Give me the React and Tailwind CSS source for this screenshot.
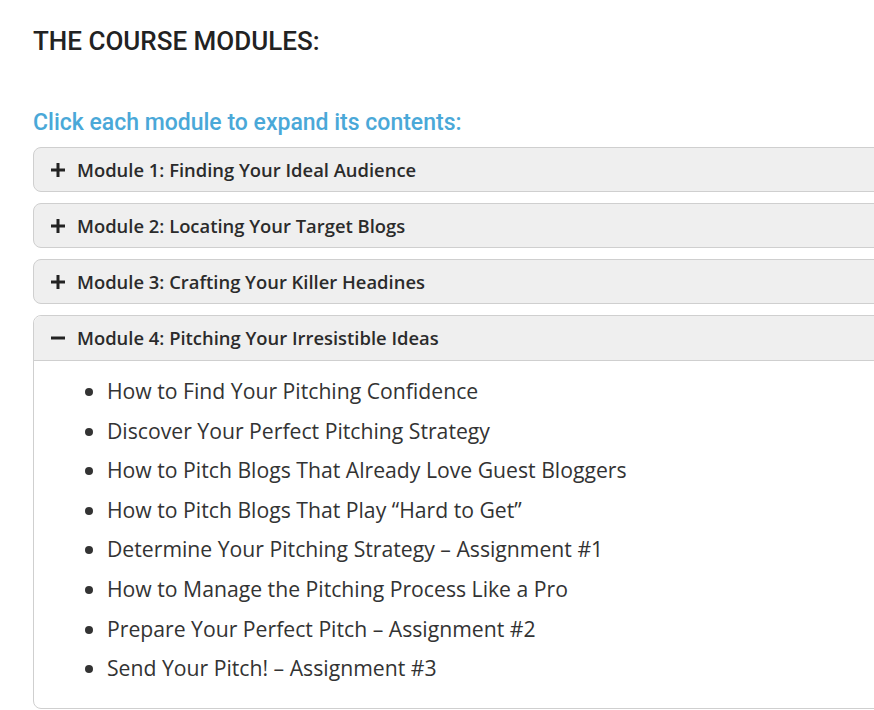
import React from "react";

const modules = [
  { title: "Module 1: Finding Your Ideal Audience", open: false },
  { title: "Module 2: Locating Your Target Blogs", open: false },
  { title: "Module 3: Crafting Your Killer Headines", open: false },
  { title: "Module 4: Pitching Your Irresistible Ideas", open: true },
];

const items = [
  "How to Find Your Pitching Confidence",
  "Discover Your Perfect Pitching Strategy",
  "How to Pitch Blogs That Already Love Guest Bloggers",
  "How to Pitch Blogs That Play \u201cHard to Get\u201d",
  "Determine Your Pitching Strategy \u2013 Assignment #1",
  "How to Manage the Pitching Process Like a Pro",
  "Prepare Your Perfect Pitch \u2013 Assignment #2",
  "Send Your Pitch! \u2013 Assignment #3",
];

function Icon({ open }) {
  return (
    <svg width="14" height="14" viewBox="0 0 14 14" className="shrink-0">
      <rect x="0" y="5.5" width="14" height="3" fill="#222" />
      {!open && <rect x="5.5" y="0" width="3" height="14" fill="#222" />}
    </svg>
  );
}

export default function App() {
  return (
    <div className="w-full h-[710px] overflow-hidden bg-white text-[#333]" style={{ fontFamily: '"Open Sans", sans-serif' }}>
      <div className="ml-[33px] -mr-[30px] pt-[24px]">
        <h2 className="text-[26px] leading-[34px] font-medium text-[#222]" style={{ fontFamily: 'Roboto, sans-serif' }}>
          THE COURSE MODULES:
        </h2>
        <p className="mt-[50px] text-[23px] leading-[30px] font-medium text-[#4aa8d8]" style={{ fontFamily: 'Roboto, sans-serif' }}>
          Click each module to expand its contents:
        </p>
        <div className="mt-[9px] flex flex-col gap-[11px]">
          {modules.map((m) => (
            <div key={m.title} className={m.open ? "rounded-[8px] border border-[#cfcfcf]" : ""}>
              <div className={"h-[45px] flex items-center gap-[12px] pl-[17px] bg-[#efefef] border-[#cfcfcf] " + (m.open ? "rounded-t-[8px] border-b" : "rounded-[8px] border")}>
                <Icon open={m.open} />
                <span className="text-[18.4px] font-semibold text-[#2b2b2b]">{m.title}</span>
              </div>
              {m.open && (
                <ul className="list-disc pl-[73px] pt-[10px] pb-[20px] text-[21.2px] leading-[39.6px] text-[#333] marker:text-[#333]">
                  {items.map((it) => (
                    <li key={it}>{it}</li>
                  ))}
                </ul>
              )}
            </div>
          ))}
        </div>
      </div>
    </div>
  );
}
